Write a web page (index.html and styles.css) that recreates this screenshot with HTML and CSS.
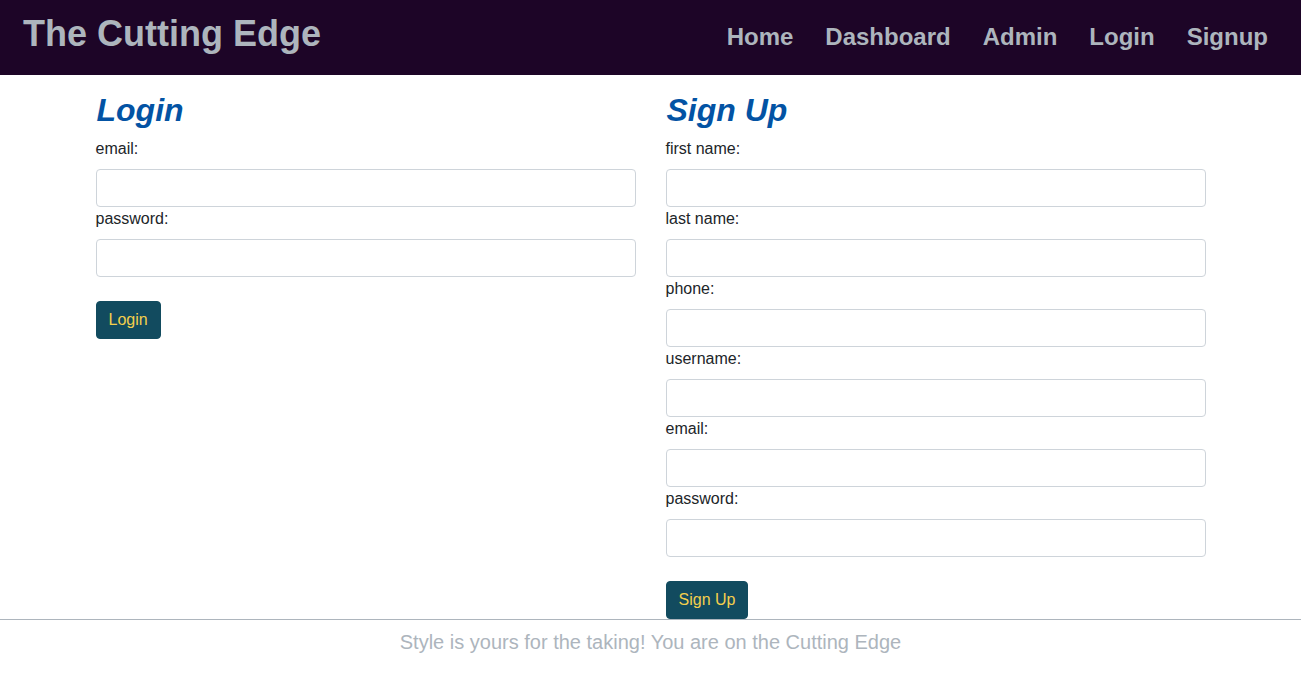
FILE: index.html
```html
<!DOCTYPE html>
<html lang="en">
<head>
<meta charset="utf-8">
<title>The Cutting Edge</title>
<link rel="stylesheet" href="styles.css">
</head>
<body>
<header class="site-header">
  <h1 class="brand">The Cutting Edge</h1>
  <nav class="nav">
    <a href="#" class="nav-link">Home</a>
    <a href="#" class="nav-link">Dashboard</a>
    <a href="#" class="nav-link">Admin</a>
    <a href="#" class="nav-link">Login</a>
    <a href="#" class="nav-link">Signup</a>
  </nav>
</header>
<main class="container">
  <div class="row">
    <section class="col">
      <h2 class="form-title">Login</h2>
      <form class="form">
        <label class="label">email:</label>
        <input class="input" type="text">
        <label class="label">password:</label>
        <input class="input" type="password">
        <button class="btn" type="button">Login</button>
      </form>
    </section>
    <section class="col">
      <h2 class="form-title">Sign Up</h2>
      <form class="form">
        <label class="label">first name:</label>
        <input class="input" type="text">
        <label class="label">last name:</label>
        <input class="input" type="text">
        <label class="label">phone:</label>
        <input class="input" type="text">
        <label class="label">username:</label>
        <input class="input" type="text">
        <label class="label">email:</label>
        <input class="input" type="text">
        <label class="label">password:</label>
        <input class="input" type="password">
        <button class="btn" type="button">Sign Up</button>
      </form>
    </section>
  </div>
</main>
<footer class="footer">Style is yours for the taking! You are on the Cutting Edge</footer>
</body>
</html>
```

FILE: styles.css
```css
* { box-sizing: border-box; }
html, body { margin: 0; padding: 0; }
body {
  font-family: "Liberation Sans", Arial, sans-serif;
  font-size: 16px;
  line-height: 1.5;
  color: #212529;
  background: #fff;
}
.site-header {
  height: 75px;
  background: #1d0527;
  display: flex;
  align-items: center;
  justify-content: space-between;
  padding: 0 33px 0 23px;
}
.brand {
  margin: 0 0 8px 0;
  font-size: 36px;
  font-weight: bold;
  line-height: 1.2;
  color: #adb5bd;
}
.nav {
  display: flex;
  gap: 32px;
  margin-bottom: 1px;
}
.nav-link {
  font-size: 24px;
  font-weight: bold;
  color: #adb5bd;
  text-decoration: none;
  line-height: 1.2;
}
.container {
  width: 1140px;
  margin: 0 auto;
  padding: 16px 15px 0;
}
.row {
  display: flex;
  margin: 0 -15px;
}
.col {
  flex: 1 1 0;
  padding: 0 15px;
}
.form-title {
  margin: 0 0 8px 1px;
  font-size: 32px;
  font-style: italic;
  font-weight: bold;
  line-height: 1.2;
  color: #0353a4;
}
.form {
  display: flex;
  flex-direction: column;
  align-items: flex-start;
}
.label {
  display: block;
  margin-bottom: 8px;
  font-size: 16px;
  line-height: 24px;
}
.input {
  display: block;
  width: 100%;
  height: 38px;
  padding: 6px 12px;
  font: inherit;
  border: 1px solid #ced4da;
  border-radius: 4px;
  background: #fff;
}
.btn {
  margin-top: 24px;
  height: 38px;
  padding: 6px 12px;
  font-family: inherit;
  font-size: 16px;
  line-height: 24px;
  background: #124b5f;
  color: #f5cf4c;
  border: 1px solid #124b5f;
  border-radius: 4px;
}
.footer {
  border-top: 1px solid #adb5bd;
  text-align: center;
  font-size: 20px;
  line-height: 44px;
  color: #adb5bd;
}
```
